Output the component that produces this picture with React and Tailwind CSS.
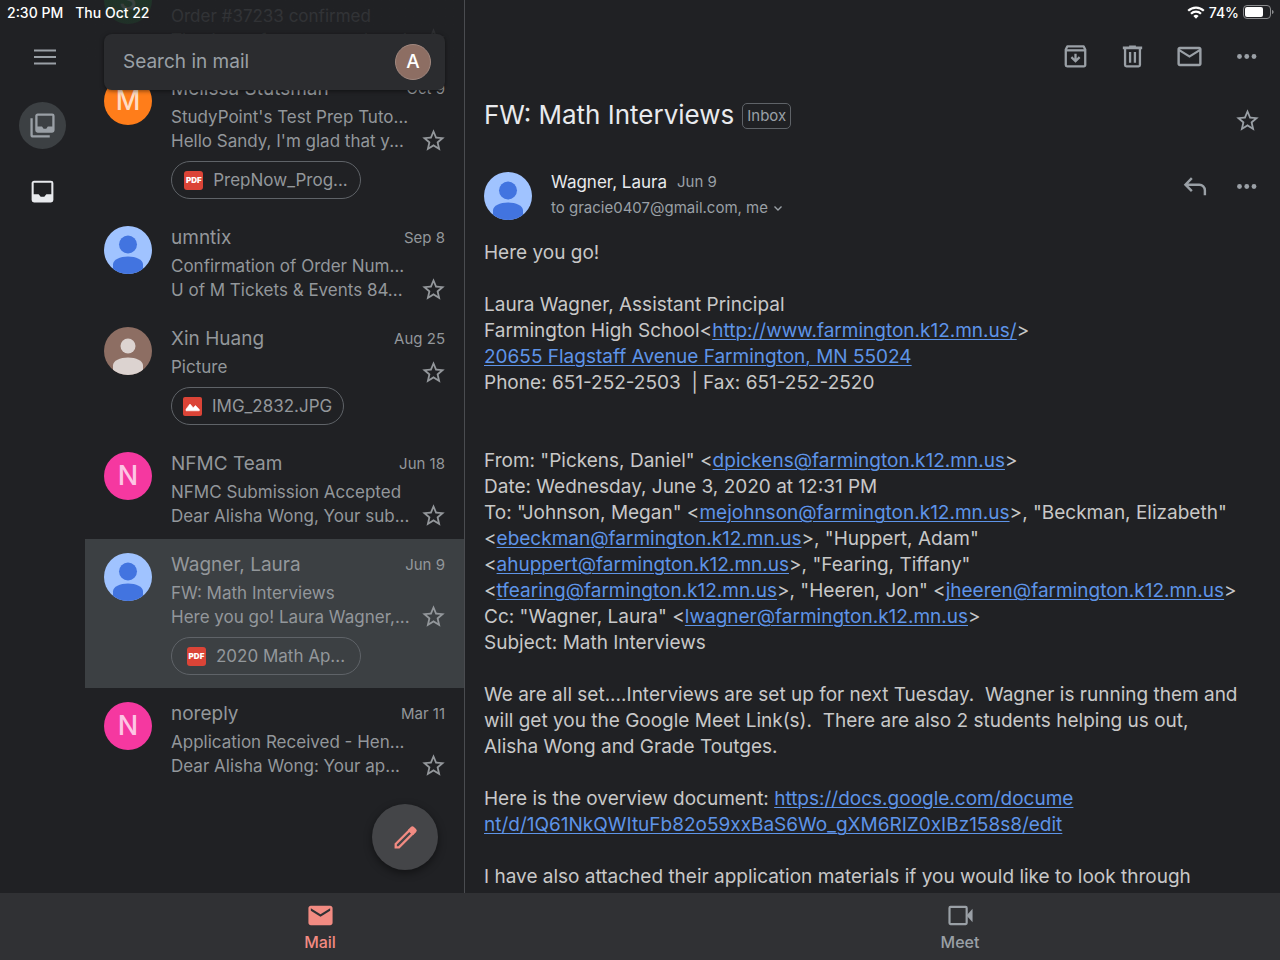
import clsx from 'clsx';

const messages = [
  {
    id: 1,
    sender: 'Shop',
    initial: 'S',
    avatar: 'bg-[#1e8e3e] text-[#b5dfc1]',
    date: 'Oct 12',
    subject: 'Order #37233 confirmed',
    snippet: 'Thank you for your purchase!',
  },
  {
    id: 2,
    sender: 'Melissa Stutsman',
    initial: 'M',
    avatar: 'bg-[#ff7d1a] text-[#ffdcc2]',
    date: 'Oct 9',
    subject: "StudyPoint's Test Prep Tuto...",
    snippet: "Hello Sandy, I'm glad that y...",
    file: { type: 'pdf', name: 'PrepNow_Prog...' },
  },
  {
    id: 3,
    sender: 'umntix',
    person: 'blue',
    date: 'Sep 8',
    subject: 'Confirmation of Order Num...',
    snippet: 'U of M Tickets & Events 84...',
  },
  {
    id: 4,
    sender: 'Xin Huang',
    person: 'brown',
    date: 'Aug 25',
    subject: 'Picture',
    file: { type: 'image', name: 'IMG_2832.JPG' },
  },
  {
    id: 5,
    sender: 'NFMC Team',
    initial: 'N',
    avatar: 'bg-[#f538a0] text-[#fdc6e4]',
    date: 'Jun 18',
    subject: 'NFMC Submission Accepted',
    snippet: 'Dear Alisha Wong, Your sub...',
  },
  {
    id: 6,
    sender: 'Wagner, Laura',
    person: 'blue',
    date: 'Jun 9',
    subject: 'FW: Math Interviews',
    snippet: 'Here you go! Laura Wagner,...',
    file: { type: 'pdf', name: '2020 Math Ap...' },
    selected: true,
  },
  {
    id: 7,
    sender: 'noreply',
    initial: 'N',
    avatar: 'bg-[#f538a0] text-[#fdc6e4]',
    date: 'Mar 11',
    subject: 'Application Received - Hen...',
    snippet: 'Dear Alisha Wong: Your ap...',
  },
];

function Icon({ children, className = 'size-[29px]' }) {
  return (
    <svg viewBox="0 0 24 24" fill="currentColor" aria-hidden="true" className={clsx('shrink-0', className)}>
      {children}
    </svg>
  );
}

const StarIcon = () => (
  <Icon className="size-[27px]">
    <path d="M22 9.24l-7.19-.62L12 2 9.19 8.63 2 9.24l5.46 4.73L5.82 21 12 17.27 18.18 21l-1.63-7.03L22 9.24zM12 15.4l-3.76 2.27 1-4.28-3.32-2.88 4.38-.38L12 6.1l1.71 4.04 4.38.38-3.32 2.88 1 4.28L12 15.4z" />
  </Icon>
);

const MoreIcon = () => (
  <Icon>
    <circle cx="6.2" cy="12" r="2" />
    <circle cx="12.2" cy="12" r="2" />
    <circle cx="18.2" cy="12" r="2" />
  </Icon>
);

const ArchiveIcon = () => (
  <Icon>
    <g fill="none" stroke="currentColor" strokeWidth="1.9" strokeLinejoin="round">
      <path d="M3.95 6.2 5.2 3.7h13.6l1.25 2.5V19a1.1 1.1 0 0 1-1.1 1.1h-13.900a1.1 1.1 0 0 1-1.1-1.1z" />
      <path d="M4 6.9h16" />
      <path d="M12 9.8v5.400M8.600 12.500l3.400 3.400 3.400-3.400" strokeLinejoin="miter" />
    </g>
  </Icon>
);

const TrashIcon = () => (
  <Icon>
    <path d="M9.200 2.800h5.600v1H20V5.900H4V3.800h5.200z" />
    <g fill="none" stroke="currentColor" strokeWidth="1.9">
      <path d="M5.850 5.500V19a1.100 1.100 0 0 0 1.100 1.100h10.100A1.100 1.100 0 0 0 18.150 19V5.500" />
      <path d="M10 8.200v9M14 8.200v9" />
    </g>
  </Icon>
);

const MailOutlineIcon = () => (
  <Icon>
    <path d="M22 6c0-1.1-.9-2-2-2H4c-1.1 0-2 .9-2 2v12c0 1.1.9 2 2 2h16c1.1 0 2-.9 2-2V6zm-2 0l-8 5-8-5h16zm0 12H4V8l8 5 8-5v10z" />
  </Icon>
);

const ReplyIcon = () => (
  <Icon>
    <path d="M9.800 5.100 4.500 10.500l5.300 5.400M4.500 10.500H16a4.600 4.600 0 0 1 4.600 4.600v4.200" fill="none" stroke="currentColor" strokeWidth="2" />
  </Icon>
);

function PersonAvatar({ tone }) {
  const blue = tone === 'blue';
  return (
    <svg viewBox="0 0 48 48" aria-hidden="true" className={clsx('size-12 shrink-0 rounded-full', blue ? 'bg-[#a0c3ff] text-[#4274e0]' : 'bg-[#8d6e63] text-[#dcd3d0]')}>
      <circle cx="24" cy={blue ? 18.5 : 19} r={blue ? 9 : 7.5} fill="currentColor" />
      <path d="M9 48V38.500C9 33.500 16 30.500 24 30.500s15 3 15 8V48z" fill="currentColor" />
    </svg>
  );
}

function FileBadge({ type }) {
  if (type === 'pdf') {
    return (
      <span className="flex size-[19px] shrink-0 items-center justify-center rounded-[3px] bg-[#db4437] text-[8px] leading-none font-black text-white">
        PDF
      </span>
    );
  }
  return (
    <svg viewBox="0 0 19 19" aria-hidden="true" className="size-[19px] shrink-0 rounded-[2px] bg-[#db4437]">
      <path d="M3 13.800v-1.600l4-5.200 3.200 3.700L12.500 8.500l3.800 4v1.300z" fill="#fff" stroke="#fff" strokeWidth=".6" strokeLinejoin="round" />
    </svg>
  );
}

function MessageRow({ message }) {
  const { sender, initial, avatar, person, date, subject, snippet, file, selected } = message;
  return (
    <li className={clsx('flex gap-[19px] px-[19px] pt-3.5', selected && 'bg-[#3c4043]', file ? 'pb-[13px]' : 'pb-[11px]')}>
      {person ? (
        <PersonAvatar tone={person} />
      ) : (
        <span className={clsx('flex size-12 shrink-0 items-center justify-center rounded-full text-[27px] font-medium', avatar)}>{initial}</span>
      )}
      <div className="min-w-0 flex-1">
        <div className="flex h-6 items-center justify-between">
          <span className="text-[19px] leading-6">{sender}</span>
          <time className="text-[15px] leading-6">{date}</time>
        </div>
        <div className="mt-1 flex justify-between">
          <div className="w-0 flex-1 text-[17px] leading-6 whitespace-nowrap">
            <p>{subject}</p>
            {snippet && <p>{snippet}</p>}
            {file && (
              <a
                href="#attachment"
                className={clsx(
                  'mt-2 inline-flex h-[38px] items-center gap-2.5 rounded-full border border-[#5f6368] align-top',
                  file.type === 'pdf' ? 'w-[190px] justify-center' : 'px-[11px]'
                )}
              >
                <FileBadge type={file.type} />
                {file.name}
              </a>
            )}
          </div>
          <button type="button" aria-label="Star" className={clsx('-mr-0.5 flex h-6 items-center self-start', snippet ? 'mt-[23px]' : 'mt-[5px]')}>
            <StarIcon />
          </button>
        </div>
      </div>
    </li>
  );
}

function StatusBar() {
  return (
    <div className="absolute inset-x-0 top-0 z-20 flex h-6 items-center justify-between pr-[6px] pl-[7px] text-[14px] font-medium text-white">
      <div className="flex gap-3">
        <span>2:30 PM</span>
        <span>Thu Oct 22</span>
      </div>
      <div className="flex items-center gap-1">
        <svg viewBox="0 0 18 13" className="h-[13px] w-[18px]" aria-hidden="true" fill="none" stroke="#fff" strokeWidth="2.200">
          <path d="M1.200 4.800a11 11 0 0 1 15.600 0" />
          <path d="M4 7.800a7 7 0 0 1 10 0" />
          <path d="M9 12.800 6.400 10a3.700 3.700 0 0 1 5.200 0z" fill="#fff" stroke="none" />
        </svg>
        <span>74%</span>
        <svg viewBox="0 0 31 14" className="h-3.5 w-[31px]" aria-hidden="true">
          <rect x=".5" y=".5" width="27" height="13" rx="3.500" fill="none" stroke="#8b8c8e" />
          <rect x="2" y="2" width="18" height="10" rx="2" fill="#fff" />
          <path d="M29 5v4c1-.3 1.600-1 1.600-2S30 5.300 29 5z" fill="#8b8c8e" />
        </svg>
      </div>
    </div>
  );
}

function Rail() {
  return (
    <nav aria-label="Mailboxes" className="flex w-[85px] shrink-0 flex-col items-center pt-[43px] text-[#9aa0a6]">
      <button type="button" aria-label="Menu">
        <svg viewBox="0 0 28 28" className="size-7" fill="none" stroke="currentColor" strokeWidth="2.200" aria-hidden="true">
          <path d="M5 7.500h22M5 14h22M5 20.500h22" />
        </svg>
      </button>
      <button type="button" aria-label="All inboxes" className="mt-[31px] flex size-[47px] items-center justify-center rounded-full bg-[#3c4043]">
        <Icon>
          <path d="M3.900 6H2v14c0 1.100.9 2 2 2h14v-1.900H4.600a.7.7 0 0 1-.7-.7z" />
          <path fillRule="evenodd" d="M8 2h12a2 2 0 0 1 2 2v12a2 2 0 0 1-2 2H8a2 2 0 0 1-2-2V4c0-1.100.9-2 2-2zm-.1 1.900v9h3.700l1.300 1.800h2.200l1.300-1.800h3.700V3.900z" />
        </Icon>
      </button>
      <button type="button" aria-label="Inbox" className="mt-7 text-[#e8eaed]">
        <Icon>
          <path fillRule="evenodd" d="M5 3h14a2 2 0 0 1 2 2v14a2 2 0 0 1-2 2H5a2 2 0 0 1-2-2V5c0-1.100.9-2 2-2zm-.3 1.700v9.500h4.100l1.700 2.200h3l1.700-2.200h4.100V4.700z" />
        </Icon>
      </button>
    </nav>
  );
}

function MailList() {
  return (
    <section aria-label="Inbox" className="relative w-[380px] shrink-0 overflow-hidden border-r border-[#4a4c50]">
      <ul className="-mt-[38px] text-[#93979b]">
        {messages.map((m) => (
          <MessageRow key={m.id} message={m} />
        ))}
      </ul>

      <div className="absolute inset-x-0 top-0 h-[60px] bg-linear-to-b from-[#202124]/83 via-[#202124]/87 to-[#202124]" />
      <div className="absolute inset-x-[19px] top-[34px] flex h-14 items-center rounded-lg bg-[#2b2c2f] pr-3.5 pl-[19px] shadow-[0_1px_4px_rgba(0,0,0,0.5)]">
        <input
          type="search"
          aria-label="Search in mail"
          placeholder="Search in mail"
          className="min-w-0 flex-1 bg-transparent text-[19px] text-[#9aa0a6] outline-none placeholder:text-[#9aa0a6]"
        />
        <button type="button" aria-label="Account" className="flex size-9 items-center justify-center rounded-full border border-[#a1887f] bg-[#8d6e63] text-[19px] font-medium text-white">
          A
        </button>
      </div>

      <button
        type="button"
        aria-label="Compose"
        className="absolute right-[26px] bottom-[23px] flex size-[66px] items-center justify-center rounded-full bg-[#444548] text-[#f28b82] shadow-[0_3px_8px_rgba(0,0,0,0.45)]"
      >
        <Icon>
          <path d="M3.900 17.400 15.200 6.100l2.700 2.700L6.600 20.100H3.900z" fill="none" stroke="currentColor" strokeWidth="1.900" />
          <path d="m14 5.700 2.400-2.400a1.800 1.800 0 0 1 2.600 0L20.700 5a1.800 1.800 0 0 1 0 2.600L18.300 10z" />
        </Icon>
      </button>
    </section>
  );
}

const Link = ({ href, children }) => (
  <a href={href || '#link'} className="break-all text-[#5e94e8] underline decoration-1 underline-offset-2">
    {children}
  </a>
);

const Address = ({ children }) => (
  <>
    &lt;<Link href={`mailto:${children}`}>{children}</Link>&gt;
  </>
);

function MessageBody() {
  return (
    <div className="mt-5 text-[19px] leading-[26px] whitespace-pre-wrap text-[#c8c8c8] [&>p]:mb-[26px]">
      <p>Here you go!</p>
      <p>
        Laura Wagner, Assistant Principal<br />
        Farmington High School&lt;<Link>http://www.farmington.k12.mn.us/</Link>&gt;<br />
        <Link>20655 Flagstaff Avenue Farmington, MN 55024</Link><br />
        Phone: 651-252-2503 &nbsp;| Fax: 651-252-2520<br />
        <br />
      </p>
      <p>
        From: "Pickens, Daniel" <Address>dpickens@farmington.k12.mn.us</Address><br />
        Date: Wednesday, June 3, 2020 at 12:31 PM<br />
        To: "Johnson, Megan" <Address>mejohnson@farmington.k12.mn.us</Address>, "Beckman, Elizabeth"<br />
        <Address>ebeckman@farmington.k12.mn.us</Address>, "Huppert, Adam"<br />
        <Address>ahuppert@farmington.k12.mn.us</Address>, "Fearing, Tiffany"<br />
        <Address>tfearing@farmington.k12.mn.us</Address>, "Heeren, Jon" <Address>jheeren@farmington.k12.mn.us</Address><br />
        Cc: "Wagner, Laura" <Address>lwagner@farmington.k12.mn.us</Address><br />
        Subject: Math Interviews
      </p>
      <p>
        We are all set....Interviews are set up for next Tuesday.&nbsp; Wagner is running them and<br />
        will get you the Google Meet Link(s).&nbsp; There are also 2 students helping us out,<br />
        Alisha Wong and Grade Toutges.
      </p>
      <p>
        Here is the overview document: <Link>https://docs.google.com/docume<br />nt/d/1Q61NkQWItuFb82o59xxBaS6Wo_gXM6RIZ0xIBz158s8/edit</Link>
      </p>
      <p>I have also attached their application materials if you would like to look through</p>
    </div>
  );
}

function MessageView() {
  return (
    <article className="min-w-0 flex-1 overflow-hidden px-[19px] text-[#9aa0a6]">
      <div className="flex justify-end gap-7 pt-[42px]">
        <button type="button" aria-label="Archive"><ArchiveIcon /></button>
        <button type="button" aria-label="Delete"><TrashIcon /></button>
        <button type="button" aria-label="Mark as unread"><MailOutlineIcon /></button>
        <button type="button" aria-label="More"><MoreIcon /></button>
      </div>

      <div className="mt-7 flex items-start">
        <h1 className="text-[26px] leading-8 text-[#e8eaed]">FW: Math Interviews</h1>
        <span className="mt-1 ml-2 flex h-[26px] items-center rounded-[5px] border border-[#5f6368] px-1 text-[15px]">Inbox</span>
        <button type="button" aria-label="Star" className="mt-2 ml-auto">
          <StarIcon />
        </button>
      </div>

      <div className="mt-[38px] flex gap-[19px]">
        <PersonAvatar tone="blue" />
        <div className="min-w-0 flex-1">
          <div className="flex items-center gap-2.5 leading-5">
            <span className="text-[17px] text-[#e8eaed]">Wagner, Laura</span>
            <span className="text-[15px]">Jun 9</span>
          </div>
          <button type="button" className="mt-1.5 flex items-center gap-1 text-[15px] leading-5">
            to gracie0407@gmail.com, me
            <svg viewBox="0 0 12 12" className="size-3" fill="none" stroke="currentColor" strokeWidth="1.400" aria-hidden="true">
              <path d="m2.500 4.500 3.500 3.500 3.500-3.500" />
            </svg>
          </button>
        </div>
        <div className="flex items-start gap-[23px]">
          <button type="button" aria-label="Reply"><ReplyIcon /></button>
          <button type="button" aria-label="More"><MoreIcon /></button>
        </div>
      </div>

      <MessageBody />
    </article>
  );
}

function TabBar() {
  return (
    <nav aria-label="Apps" className="grid h-[67px] shrink-0 grid-cols-2 bg-[#303134] text-[16px] leading-5 font-medium text-[#9aa0a6]">
      <a href="#mail" className="flex flex-col items-center gap-0.5 pt-2 text-[#f28b82]">
        <Icon>
          <path d="M20 4H4c-1.100 0-2 .9-2 2v12c0 1.100.9 2 2 2h16c1.100 0 2-.9 2-2V6c0-1.100-.9-2-2-2zm0 4l-8 5-8-5V6l8 5 8-5v2z" />
        </Icon>
        Mail
      </a>
      <a href="#meet" className="flex flex-col items-center gap-0.5 pt-2">
        <Icon>
          <rect x="2.900" y="4.900" width="14.200" height="14.200" rx=".8" fill="none" stroke="currentColor" strokeWidth="1.800" />
          <path d="M17 12 22 6.500v11z" />
        </Icon>
        Meet
      </a>
    </nav>
  );
}

export default function App() {
  return (
    <div className="relative flex h-screen flex-col overflow-hidden bg-[#202124] font-['Inter',sans-serif]">
      <StatusBar />
      <main className="flex min-h-0 flex-1">
        <Rail />
        <MailList />
        <MessageView />
      </main>
      <TabBar />
    </div>
  );
}
